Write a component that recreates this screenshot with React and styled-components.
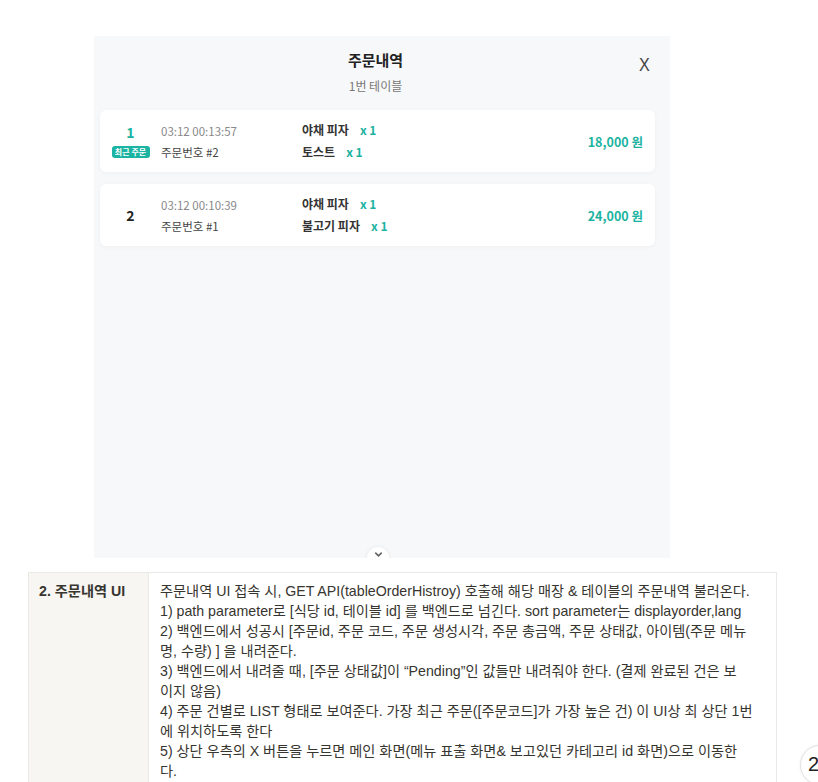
import React from "react";
import styled, { createGlobalStyle } from "styled-components";
import { ChevronDown } from "lucide-react";

const TEAL = "#1bb3a1";

const GlobalStyle = createGlobalStyle`
  body {
    margin: 0;
    background: #ffffff;
    font-family: "Noto Sans CJK KR", "Noto Sans", sans-serif;
    color: #37352f;
  }
`;

const Page = styled.div`
  position: relative;
  width: 818px;
  height: 782px;
  overflow: hidden;
  padding-top: 36px;
  box-sizing: border-box;
`;

const Panel = styled.div`
  position: relative;
  margin-left: 94px;
  width: 576px;
  height: 522px;
  background: #f7f8fa;
  overflow: hidden;
  padding: 0 15px 0 6px;
  box-sizing: border-box;
`;

const Header = styled.div`
  display: grid;
  grid-template-columns: 1fr auto 1fr;
  padding: 14px 4px 16px 0;
`;

const TitleBlock = styled.div`
  grid-column: 2;
  display: flex;
  flex-direction: column;
  align-items: center;
`;

const Title = styled.div`
  font-size: 15px;
  line-height: 20px;
  font-weight: 700;
  color: #222;
`;

const Subtitle = styled.div`
  margin-top: 8px;
  font-size: 12px;
  line-height: 16px;
  color: #777;
`;

const CloseButton = styled.div`
  grid-column: 3;
  justify-self: end;
  margin-top: 5px;
  font-family: "Liberation Sans", sans-serif;
  font-size: 19px;
  line-height: 20px;
  color: #444;
  transform: scaleX(0.85);
`;

const List = styled.div`
  display: flex;
  flex-direction: column;
  gap: 12px;
`;

const Card = styled.div`
  display: grid;
  grid-template-columns: 61px 141px 1fr auto;
  align-items: center;
  height: 62px;
  padding-right: 12px;
  background: #fff;
  border-radius: 6px;
  box-shadow: 0 1px 4px rgba(0, 0, 0, 0.04);
`;

const NumberCol = styled.div`
  display: flex;
  flex-direction: column;
  align-items: center;
  gap: 6px;
`;

const OrderIndex = styled.div`
  font-size: 14px;
  line-height: 16px;
  font-weight: 700;
  color: ${(p) => (p.$recent ? TEAL : "#222")};
`;

const Badge = styled.div`
  width: 38px;
  height: 12px;
  border-radius: 3px;
  background: ${TEAL};
  color: #fff;
  font-size: 8px;
  line-height: 12px;
  font-weight: 700;
  text-align: center;
`;

const InfoCol = styled.div`
  display: flex;
  flex-direction: column;
  gap: 5px;
`;

const DateText = styled.div`
  font-size: 11.5px;
  line-height: 16px;
  color: #888;
`;

const OrderCode = styled.div`
  font-size: 11.5px;
  line-height: 16px;
  color: #444;
`;

const ItemsCol = styled.div`
  display: flex;
  flex-direction: column;
  gap: 4px;
`;

const ItemRow = styled.div`
  display: flex;
  gap: 11px;
  font-size: 12px;
  line-height: 18px;
  font-weight: 700;
`;

const ItemName = styled.span`
  color: #333;
`;

const ItemQty = styled.span`
  color: ${TEAL};
`;

const Price = styled.div`
  font-size: 12.5px;
  font-weight: 700;
  color: ${TEAL};
`;

const ScrollHint = styled.div`
  position: absolute;
  left: 273px;
  bottom: -11px;
  width: 22px;
  height: 22px;
  border-radius: 50%;
  background: #fff;
  box-shadow: 0 0 4px rgba(0, 0, 0, 0.08);
  display: flex;
  justify-content: center;
  padding-top: 2px;
  box-sizing: border-box;
  color: #666;
`;

const Table = styled.div`
  margin: 14px 0 0 28px;
  width: 747px;
  display: grid;
  grid-template-columns: 120px 1fr;
  border-top: 1px solid #e9e9e7;
  border-right: 1px solid #e9e9e7;
  border-left: 1px solid #e9e9e7;
  font-family: "Liberation Sans", "Noto Sans CJK KR", sans-serif;
  font-size: 14.2px;
  line-height: 20px;
  color: #37352f;
`;

const HeadCell = styled.div`
  background: #f7f6f3;
  border-right: 1px solid #e9e9e7;
  padding: 8px 10px 40px 10px;
  font-weight: 700;
`;

const BodyCell = styled.div`
  padding: 8px 10px 40px 11px;
`;

const Line = styled.div`
  white-space: nowrap;
`;

const HelpBubble = styled.div`
  position: absolute;
  left: 800px;
  top: 745px;
  width: 40px;
  height: 40px;
  border-radius: 50%;
  background: #fff;
  border: 1px solid #e3e3e3;
  box-shadow: 0 0 3px rgba(0, 0, 0, 0.08);
  padding-left: 7px;
  box-sizing: border-box;
  font-family: "Liberation Sans", sans-serif;
  font-size: 20px;
  line-height: 36px;
  color: #222;
`;

const orders = [
  {
    index: 1,
    recent: true,
    date: "03:12 00:13:57",
    code: "주문번호 #2",
    items: [
      { name: "야채 피자", qty: 1 },
      { name: "토스트", qty: 1 },
    ],
    price: "18,000 원",
  },
  {
    index: 2,
    recent: false,
    date: "03:12 00:10:39",
    code: "주문번호 #1",
    items: [
      { name: "야채 피자", qty: 1 },
      { name: "불고기 피자", qty: 1 },
    ],
    price: "24,000 원",
  },
];

const specLines = [
  "주문내역 UI 접속 시, GET API(tableOrderHistroy) 호출해 해당 매장 & 테이블의 주문내역 불러온다.",
  "1) path parameter로 [식당 id, 테이블 id] 를 백엔드로 넘긴다. sort parameter는 displayorder,lang",
  "2) 백엔드에서 성공시 [주문id, 주문 코드, 주문 생성시각, 주문 총금액, 주문 상태값, 아이템(주문 메뉴",
  "명, 수량) ] 을 내려준다.",
  "3) 백엔드에서 내려줄 때, [주문 상태값]이 “Pending”인 값들만 내려줘야 한다. (결제 완료된 건은 보",
  "이지 않음)",
  "4) 주문 건별로 LIST 형태로 보여준다. 가장 최근 주문([주문코드]가 가장 높은 건) 이 UI상 최 상단 1번",
  "에 위치하도록 한다",
  "5)  상단 우측의 X 버튼을 누르면 메인 화면(메뉴 표출 화면& 보고있던 카테고리 id 화면)으로 이동한",
  "다.",
];

export default function App() {
  return (
    <Page>
      <GlobalStyle />
      <Panel>
        <Header>
          <TitleBlock>
            <Title>주문내역</Title>
            <Subtitle>1번 테이블</Subtitle>
          </TitleBlock>
          <CloseButton>X</CloseButton>
        </Header>
        <List>
          {orders.map((o) => (
            <Card key={o.index}>
              <NumberCol>
                <OrderIndex $recent={o.recent}>{o.index}</OrderIndex>
                {o.recent && <Badge>최근 주문</Badge>}
              </NumberCol>
              <InfoCol>
                <DateText>{o.date}</DateText>
                <OrderCode>{o.code}</OrderCode>
              </InfoCol>
              <ItemsCol>
                {o.items.map((it) => (
                  <ItemRow key={it.name}>
                    <ItemName>{it.name}</ItemName>
                    <ItemQty>x {it.qty}</ItemQty>
                  </ItemRow>
                ))}
              </ItemsCol>
              <Price>{o.price}</Price>
            </Card>
          ))}
        </List>
        <ScrollHint>
          <ChevronDown size={11} strokeWidth={3.5} />
        </ScrollHint>
      </Panel>
      <Table>
        <HeadCell>2. 주문내역 UI</HeadCell>
        <BodyCell>
          {specLines.map((l, i) => (
            <Line key={i}>{l}</Line>
          ))}
        </BodyCell>
      </Table>
      <HelpBubble>2</HelpBubble>
    </Page>
  );
}
